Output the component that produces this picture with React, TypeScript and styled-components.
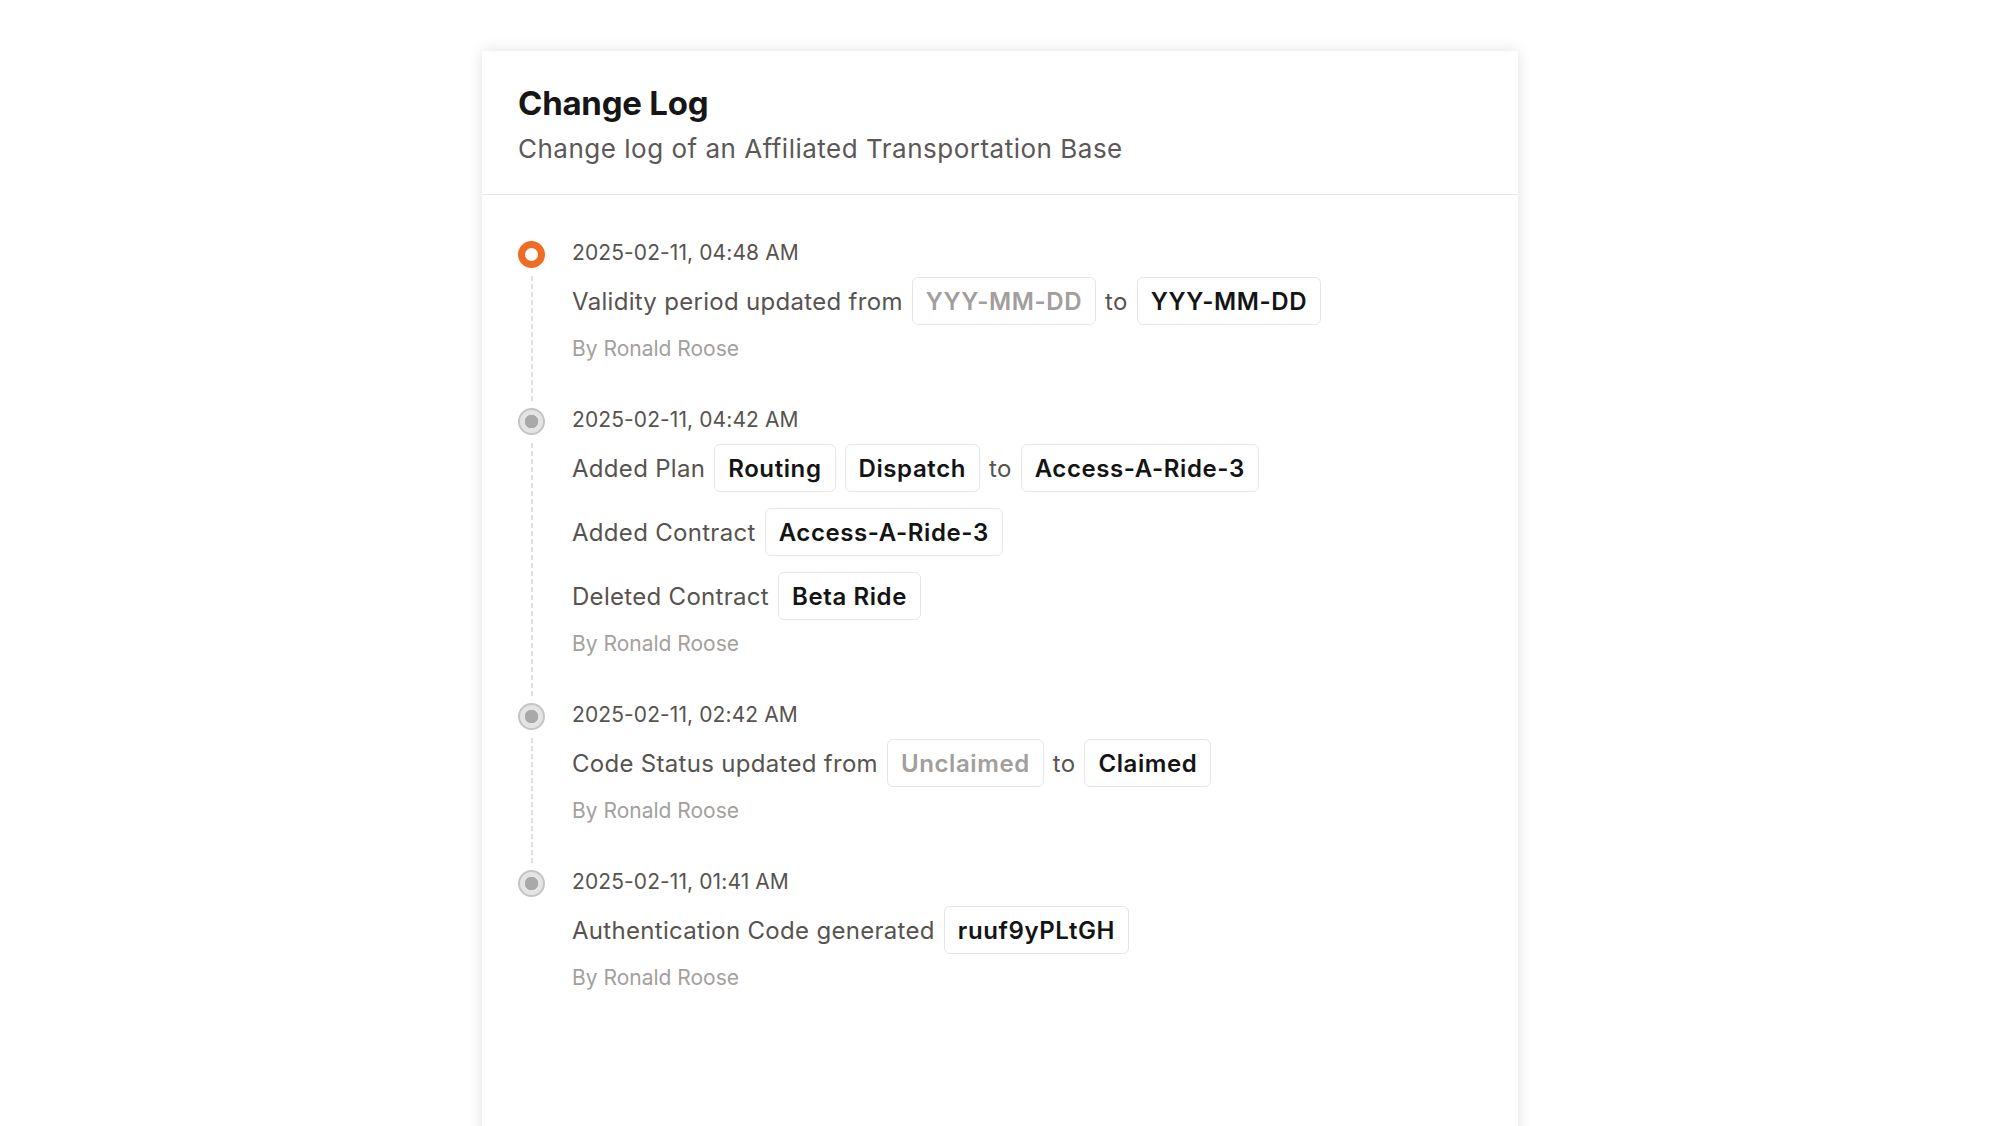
import React from 'react';
import styled, { createGlobalStyle } from 'styled-components';

const GlobalStyle = createGlobalStyle`
  html, body {
    margin: 0;
    padding: 0;
    background: #ffffff;
  }
  body {
    font-family: Inter, "Open Sans", "Liberation Sans", sans-serif;
    color: #1a1a1a;
  }
`;

type Part = { text: string; chip?: boolean; muted?: boolean };
type Entry = { date: string; active?: boolean; lines: Part[][]; by: string };

const entries: Entry[] = [
  {
    date: '2025-02-11, 04:48 AM',
    active: true,
    lines: [
      [
        { text: 'Validity period updated from' },
        { text: 'YYY-MM-DD', chip: true, muted: true },
        { text: 'to' },
        { text: 'YYY-MM-DD', chip: true },
      ],
    ],
    by: 'By Ronald Roose',
  },
  {
    date: '2025-02-11, 04:42 AM',
    lines: [
      [
        { text: 'Added Plan' },
        { text: 'Routing', chip: true },
        { text: 'Dispatch', chip: true },
        { text: 'to' },
        { text: 'Access-A-Ride-3', chip: true },
      ],
      [{ text: 'Added Contract' }, { text: 'Access-A-Ride-3', chip: true }],
      [{ text: 'Deleted Contract' }, { text: 'Beta Ride', chip: true }],
    ],
    by: 'By Ronald Roose',
  },
  {
    date: '2025-02-11, 02:42 AM',
    lines: [
      [
        { text: 'Code Status updated from' },
        { text: 'Unclaimed', chip: true, muted: true },
        { text: 'to' },
        { text: 'Claimed', chip: true },
      ],
    ],
    by: 'By Ronald Roose',
  },
  {
    date: '2025-02-11, 01:41 AM',
    lines: [[{ text: 'Authentication Code generated' }, { text: 'ruuf9yPLtGH', chip: true }]],
    by: 'By Ronald Roose',
  },
];

function App() {
  return (
    <>
      <GlobalStyle />
      <Page>
        <Card>
          <Header>
            <Title>Change Log</Title>
            <Subtitle>Change log of an Affiliated Transportation Base</Subtitle>
          </Header>
          <Timeline>
            {entries.map((entry, i) => (
              <Item key={entry.date} $last={i === entries.length - 1}>
                <Rail>
                  <Dot $active={entry.active} />
                  {i < entries.length - 1 && <Dash />}
                </Rail>
                <Content>
                  <Date>{entry.date}</Date>
                  <Lines>
                    {entry.lines.map((line, j) => (
                      <Line key={j}>
                        {line.map((part, k) =>
                          part.chip ? (
                            <Chip key={k} $muted={part.muted}>
                              {part.text}
                            </Chip>
                          ) : (
                            <Label key={k}>{part.text}</Label>
                          )
                        )}
                      </Line>
                    ))}
                  </Lines>
                  <Author>{entry.by}</Author>
                </Content>
              </Item>
            ))}
          </Timeline>
        </Card>
      </Page>
    </>
  );
}

export default App;

const Page = styled.div`
  height: 1126px;
  overflow: hidden;
  display: flex;
  justify-content: center;
  padding-top: 51px;
  box-sizing: border-box;
`;

const Card = styled.div`
  width: 1036px;
  min-height: 1200px;
  background: #ffffff;
  box-shadow: 0 0 14px rgba(0, 0, 0, 0.12);
`;

const Header = styled.div`
  padding: 32px 36px 29px;
  border-bottom: 1px solid #e6e6e6;
  display: flex;
  flex-direction: column;
  gap: 10px;
`;

const Title = styled.h1`
  margin: 0;
  font-size: 33px;
  line-height: 40px;
  font-weight: 700;
  letter-spacing: -0.25px;
  color: #161616;
`;

const Subtitle = styled.p`
  margin: 0;
  font-size: 26px;
  line-height: 32px;
  font-weight: 400;
  letter-spacing: 0.5px;
  color: #5b5857;
`;

const Timeline = styled.div`
  padding: 44px 36px 0;
`;

const Item = styled.div<{ $last?: boolean }>`
  display: flex;
  gap: 27px;
  padding-bottom: ${(p) => (p.$last ? 0 : 43)}px;
  position: relative;
`;

const Rail = styled.div`
  width: 27px;
  flex-shrink: 0;
  display: flex;
  flex-direction: column;
  align-items: center;
`;

const Dot = styled.div<{ $active?: boolean }>`
  width: 27px;
  height: 27px;
  border-radius: 50%;
  box-sizing: border-box;
  flex-shrink: 0;
  margin-top: 2px;
  ${(p) =>
    p.$active
      ? `
    border: 7px solid #ef6c24;
    background: #ffffff;
  `
      : `
    border: 2px solid #c4c4c4;
    background: radial-gradient(circle, #a9a9a9 0 6.5px, #e4e4e4 7px);
  `}
`;

const Dash = styled.div`
  position: absolute;
  left: 12.5px;
  top: 37px;
  bottom: 3px;
  width: 2px;
  background: repeating-linear-gradient(to bottom, #e0e0e0 0 5px, transparent 5px 8px);
`;

const Content = styled.div`
  display: flex;
  flex-direction: column;
  gap: 10px;
`;

const Date = styled.div`
  font-size: 21px;
  line-height: 28px;
  color: #57534f;
  letter-spacing: 0.1px;
`;

const Lines = styled.div`
  display: flex;
  flex-direction: column;
  gap: 16px;
`;

const Line = styled.div`
  display: flex;
  align-items: center;
  gap: 9px;
  height: 48px;
`;

const Label = styled.span`
  font-size: 24px;
  color: #57534f;
  letter-spacing: 0.3px;
`;

const Chip = styled.span<{ $muted?: boolean }>`
  display: inline-flex;
  align-items: center;
  height: 48px;
  box-sizing: border-box;
  padding: 0 13px;
  border: 1px solid #e6e6e6;
  border-radius: 6px;
  font-size: 24px;
  font-weight: 600;
  letter-spacing: 0.6px;
  color: ${(p) => (p.$muted ? '#a19e9c' : '#141414')};
`;

const Author = styled.div`
  font-size: 21px;
  line-height: 28px;
  color: #a3a09e;
`;
